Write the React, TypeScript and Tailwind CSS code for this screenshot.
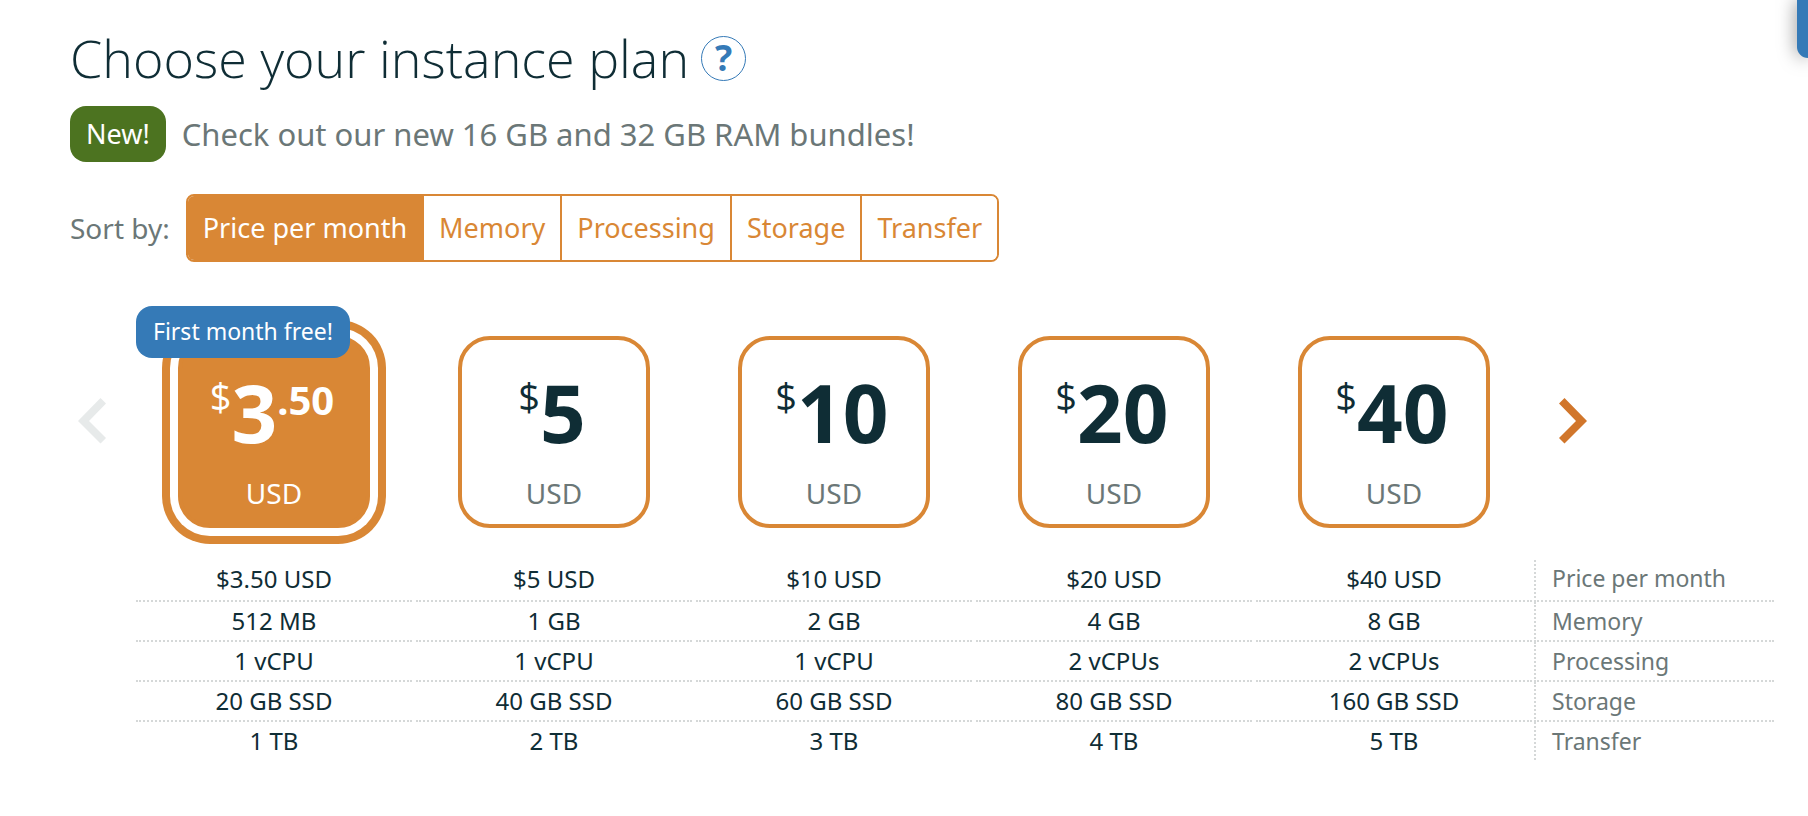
import { useState } from "react";

const sortOptions = ["Price per month", "Memory", "Processing", "Storage", "Transfer"];

const plans = [
  { whole: "3", cents: ".50", promo: "First month free!" },
  { whole: "5" },
  { whole: "10" },
  { whole: "20" },
  { whole: "40" },
];

const specs = [
  { label: "Price per month", values: ["$3.50 USD", "$5 USD", "$10 USD", "$20 USD", "$40 USD"] },
  { label: "Memory", values: ["512 MB", "1 GB", "2 GB", "4 GB", "8 GB"] },
  { label: "Processing", values: ["1 vCPU", "1 vCPU", "1 vCPU", "2 vCPUs", "2 vCPUs"] },
  { label: "Storage", values: ["20 GB SSD", "40 GB SSD", "60 GB SSD", "80 GB SSD", "160 GB SSD"] },
  { label: "Transfer", values: ["1 TB", "2 TB", "3 TB", "4 TB", "5 TB"] },
];

function Chevron({ direction }: { direction: "left" | "right" }) {
  return (
    <svg width="28" height="46" viewBox="0 0 28 46" fill="currentColor" aria-hidden="true">
      {direction === "left" ? (
        <path d="M22.5 0 28 5.6 11 23 28 40 22.5 45.5 0 23Z" />
      ) : (
        <path d="M5.5 0 0 5.6 17 23 0 40 5.5 45.5 28 23Z" />
      )}
    </svg>
  );
}

export default function App() {
  const [sort, setSort] = useState("Price per month");
  const [selected, setSelected] = useState(0);

  return (
    <main className="overflow-hidden bg-white pt-6 pr-[34px] pb-12 pl-[70px] font-['Noto_Sans','Open_Sans',sans-serif] text-[#0f2d35]">
      <button
        type="button"
        aria-label="Feedback"
        className="fixed top-0 right-0 h-[58px] w-[11px] rounded-bl-[16px] bg-[#357ab7] shadow-[0_0_18px_rgba(0,0,0,0.5)]"
      />

      <div className="flex items-center gap-3">
        <h1 className="font-['Open_Sans','Noto_Sans',sans-serif] text-[52px] leading-[68px] font-light">
          Choose your instance plan
        </h1>
        <button
          type="button"
          aria-label="Help"
          className="flex size-[45px] items-center justify-center rounded-full border border-[#357ab7] text-[36px] leading-none font-bold text-[#357ab7]"
        >
          ?
        </button>
      </div>

      <div className="mt-[14px] flex items-center gap-4">
        <span className="flex h-14 items-center rounded-[16px] bg-[#4c7320] px-4 text-[27px] text-white">New!</span>
        <p className="text-[31px] leading-10 text-[#6b7777]">Check out our new 16 GB and 32 GB RAM bundles!</p>
      </div>

      <div className="mt-8 flex items-center gap-4">
        <span id="sort-label" className="text-[28px] text-[#6b7777]">
          Sort by:
        </span>
        <div
          role="group"
          aria-labelledby="sort-label"
          className="flex h-[68px] divide-x-2 divide-[#d98735] overflow-hidden rounded-[8px] border-2 border-[#d98735]"
        >
          {sortOptions.map((option) => (
            <button
              key={option}
              type="button"
              aria-pressed={sort === option}
              onClick={() => setSort(option)}
              className={`px-[15px] text-[27px] whitespace-nowrap ${
                sort === option ? "bg-[#d98735] text-white" : "bg-white text-[#d98735]"
              }`}
            >
              {option}
            </button>
          ))}
        </div>
      </div>

      <div className="mt-[74px] flex items-center">
        <button
          type="button"
          aria-label="Previous plans"
          disabled
          className="mb-[22px] w-[66px] shrink-0 pl-2 text-[#e7eaea]"
        >
          <Chevron direction="left" />
        </button>
        <div className="grid flex-1 grid-cols-5">
          {plans.map((plan, index) => {
            const active = selected === index;
            return (
              <div key={plan.whole} className="relative flex justify-center pr-1">
                <button
                  type="button"
                  aria-pressed={active}
                  onClick={() => setSelected(index)}
                  className={`flex size-48 flex-col items-center rounded-[32px] border-4 border-[#d98735] pt-[30px] ${
                    active
                      ? "bg-[#d98735] text-white shadow-[0_0_0_8px_#fff,0_0_0_16px_#d98735]"
                      : "bg-white"
                  }`}
                >
                  <span className="flex items-start pr-1">
                    <span className="font-['Open_Sans','Noto_Sans',sans-serif] text-[38px] leading-[52px]">$</span>
                    <span className="text-[80px] leading-[84px] font-bold">{plan.whole}</span>
                    {plan.cents && <span className="text-[40px] leading-[60px] font-bold">{plan.cents}</span>}
                  </span>
                  <span className={`mt-[21px] text-[28px] leading-9 ${active ? "text-white" : "text-[#6b7777]"}`}>
                    USD
                  </span>
                </button>
                {plan.promo && (
                  <span className="absolute -top-[30px] left-0 flex h-[52px] items-center rounded-[16px] bg-[#357ab7] px-[17px] pb-0.5 text-[23px] whitespace-nowrap text-white">
                    {plan.promo}
                  </span>
                )}
              </div>
            );
          })}
        </div>
        <div className="mb-[22px] w-[238px] shrink-0 pl-[23px]">
          <button type="button" aria-label="Next plans" className="block text-[#d1762b]">
            <Chevron direction="right" />
          </button>
        </div>
      </div>

      <div className="mt-8 pl-[66px]">
        <table aria-label="Plan specifications" className="w-full table-fixed border-collapse text-[24px] leading-[38px]">
          <colgroup>
            <col />
            <col />
            <col />
            <col />
            <col />
            <col className="w-[238px]" />
          </colgroup>
          <tbody>
            {specs.map((spec, row) => {
              const line = row < specs.length - 1 ? "border-b-2" : "";
              return (
                <tr key={spec.label}>
                  {spec.values.map((value, column) => (
                    <td key={column} className="p-0 pr-1 text-center">
                      <div className={`border-dotted border-[#d5d8d8] ${line} ${row === 0 ? "pb-0.5" : ""}`}>
                        {value}
                      </div>
                    </td>
                  ))}
                  <th scope="row" className="p-0 text-left text-[23px] font-normal text-[#6b7777]">
                    <div
                      className={`-ml-0.5 border-l-2 border-dotted border-[#d5d8d8] pl-4 ${line} ${
                        row === 0 ? "pb-1 leading-9" : ""
                      }`}
                    >
                      {spec.label}
                    </div>
                  </th>
                </tr>
              );
            })}
          </tbody>
        </table>
      </div>
    </main>
  );
}
